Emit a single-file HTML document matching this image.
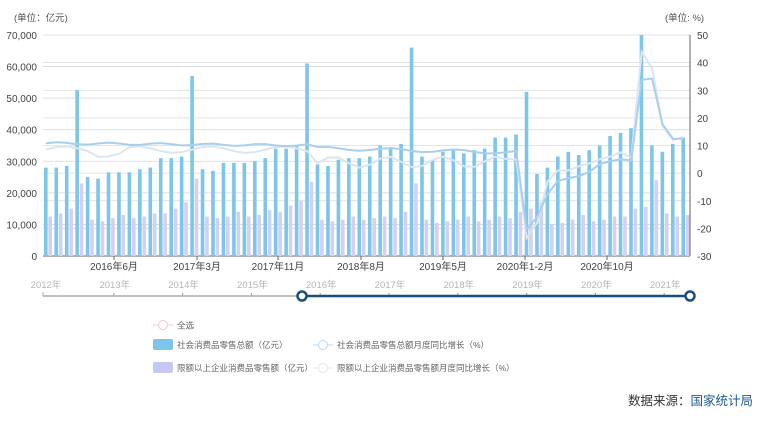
<!DOCTYPE html><html><head><meta charset="utf-8"><style>
body{margin:0;background:#fff;width:761px;height:419px;overflow:hidden;font-family:"Liberation Sans","Noto Sans CJK SC",sans-serif}
</style></head><body>
<svg id="s" width="761" height="419" xmlns="http://www.w3.org/2000/svg" font-family="Liberation Sans, Noto Sans CJK SC, sans-serif"></svg>
<script>
var s=document.getElementById('s'),h='';
var T=35,B=256,L=43,R=690;
function yl(v){return B-v*(B-T)/70000}
function yr(p){return T+(50-p)*(B-T)/80}
for(var i=0;i<=7;i++){var y=yl(i*10000);h+='<line x1="'+L+'" x2="'+R+'" y1="'+y+'" y2="'+y+'" stroke="'+(i?'#d6d6d6':'#666')+'" stroke-width="'+(i?0.8:1)+'"/>';
h+='<text x="37" y="'+(y+4)+'" font-size="10" fill="#444" text-anchor="end">'+(i?(i*10)+',000':'0')+'</text>';}
for(var i=0;i<=8;i++){var p=50-i*10,y=yr(p);if(i>0&&i<8)h+='<line x1="'+L+'" x2="'+R+'" y1="'+y+'" y2="'+y+'" stroke="#dcdcdc" stroke-width="0.8"/>';
h+='<text x="697" y="'+(y+4)+'" font-size="10" fill="#444">'+p+'</text>';}
h+='<line x1="'+R+'" x2="'+R+'" y1="'+T+'" y2="'+B+'" stroke="#666"/>';
h+='<text x="14" y="21" font-size="9.5" fill="#555">(单位：亿元)</text><text x="665" y="21" font-size="9.5" fill="#555">(单位: %)</text>';
var b=[28000,28000,28500,52500,25000,24500,26500,26500,26500,27500,28000,31000,31000,31500,57000,27500,27000,29500,29500,29500,30000,31000,34000,34000,35000,61000,29000,28500,30500,31000,31000,31500,35000,34500,35500,66000,31500,30500,33000,33500,32500,33500,34000,37500,37500,38500,52000,26000,28000,31500,33000,32000,33500,35000,38000,39000,40500,70000,35000,33000,35500,37500];
var pu=[12500,13500,15000,23000,11500,11000,12000,13000,12000,12500,13500,13500,15000,17000,24500,12500,12000,12500,14000,12500,13000,14500,14000,16000,17500,23500,11500,11000,11500,12500,11500,12000,12500,12000,14000,23000,11500,10500,11000,11500,12500,11000,11500,12500,12000,14000,15000,17000,10000,10500,11500,13000,11000,11500,12500,12500,15000,15500,24000,13500,12500,13000];
var sp=10.45;
for(var i=0;i<b.length;i++){var x=44+i*sp;
h+='<rect x="'+x+'" y="'+yl(b[i])+'" width="3.6" height="'+(B-yl(b[i]))+'" fill="#7cc6ec"/>';
h+='<rect x="'+(x+4.4)+'" y="'+yl(pu[i])+'" width="3.6" height="'+(B-yl(pu[i]))+'" fill="#d3d0f0"/>';}
var l1=[],l2=[];
for(var i=0;i<62;i++){var a,c;
if(i<26){a=10.8-i*0.03+Math.sin(i*1.3)*0.4;c=8.5+Math.sin(i*0.9)*1.2-(i>4&&i<8?1.5:0);}
else if(i<46){a=9-(i-26)*0.08+Math.sin(i)*0.6;c=4+Math.sin(i*1.2)*2;}
else{var A=[8,-20.5,-15.8,-7.5,-2.8,-1.8,-1.1,0.5,3.3,4.3,5,4.6,33.8,34.2,17.7,12.4,12.5];var C=[5,-23.5,-18,-3,1,1,2.5,3.5,5,6,7.5,5.5,43.9,38,17,12,13];a=A[i-45];c=C[i-45];}
if(i==45){a=8;c=5}
var x=46+i*sp;l1.push(x+','+yr(a));l2.push(x+','+yr(c));}
h+='<polyline points="'+l2.join(' ')+'" fill="none" stroke="#dce6f2" stroke-width="2"/>';
h+='<polyline points="'+l1.join(' ')+'" fill="none" stroke="#a9cfee" stroke-width="2"/>';
var xl=[[114,'2016年6月'],[197,'2017年3月'],[278,'2017年11月'],[361,'2018年8月'],[443,'2019年5月'],[525,'2020年1-2月'],[607,'2020年10月']];
xl.forEach(function(t){h+='<line x1="'+t[0]+'" x2="'+t[0]+'" y1="256" y2="260" stroke="#666"/><text x="'+t[0]+'" y="270" font-size="10" fill="#444" text-anchor="middle">'+t[1]+'</text>';});
var yrs=['2012年','2013年','2014年','2015年','2016年','2017年','2018年','2019年','2020年','2021年'];
for(var i=0;i<10;i++){var x=46+i*68.8;h+='<text x="'+(x)+'" y="288" font-size="9.5" fill="#b5b5b5" text-anchor="middle">'+yrs[i]+'</text>';if(i)h+='<line x1="'+(x-1)+'" x2="'+(x-1)+'" y1="293" y2="296" stroke="#999"/>';}
h+='<line x1="43" x2="302" y1="296" y2="296" stroke="#aaa" stroke-width="1.5"/><line x1="43" x2="43" y1="292" y2="296" stroke="#aaa"/>';
h+='<line x1="302" x2="690" y1="296" y2="296" stroke="#1d4f78" stroke-width="2.5"/>';
h+='<circle cx="302" cy="296" r="4.5" fill="#fff" stroke="#1d4f78" stroke-width="2.5"/><circle cx="690" cy="296" r="4.5" fill="#fff" stroke="#1d4f78" stroke-width="2.5"/>';
h+='<line x1="153" x2="173" y1="325" y2="325" stroke="#f0c8d4"/><circle cx="163" cy="325" r="4.5" fill="#fff" stroke="#f0c8d4"/><text x="177" y="328.5" font-size="8.5" fill="#666">全选</text>';
h+='<rect x="153" y="339" width="20" height="11" rx="2" fill="#7cc6ec"/><text x="177" y="348" font-size="8.5" fill="#666">社会消费品零售总额（亿元）</text>';
h+='<rect x="153" y="362" width="20" height="11" rx="2" fill="#c6c8f4"/><text x="177" y="371" font-size="8.5" fill="#666">限额以上企业消费品零售额（亿元）</text>';
h+='<line x1="313" x2="333" y1="345" y2="345" stroke="#b8d8ee"/><circle cx="323" cy="345" r="4.5" fill="#fff" stroke="#b8d8ee"/><text x="337" y="348" font-size="8.5" fill="#666">社会消费品零售总额月度同比增长（%）</text>';
h+='<line x1="313" x2="333" y1="368" y2="368" stroke="#e0e4ea"/><circle cx="323" cy="368" r="4.5" fill="#fff" stroke="#e0e4ea"/><text x="337" y="371" font-size="8.5" fill="#666">限额以上企业消费品零售额月度同比增长（%）</text>';
h+='<text x="628" y="405" font-size="12.5" fill="#333">数据来源：<tspan fill="#1d5a96">国家统计局</tspan></text>';
s.innerHTML=h;
</script></body></html>
